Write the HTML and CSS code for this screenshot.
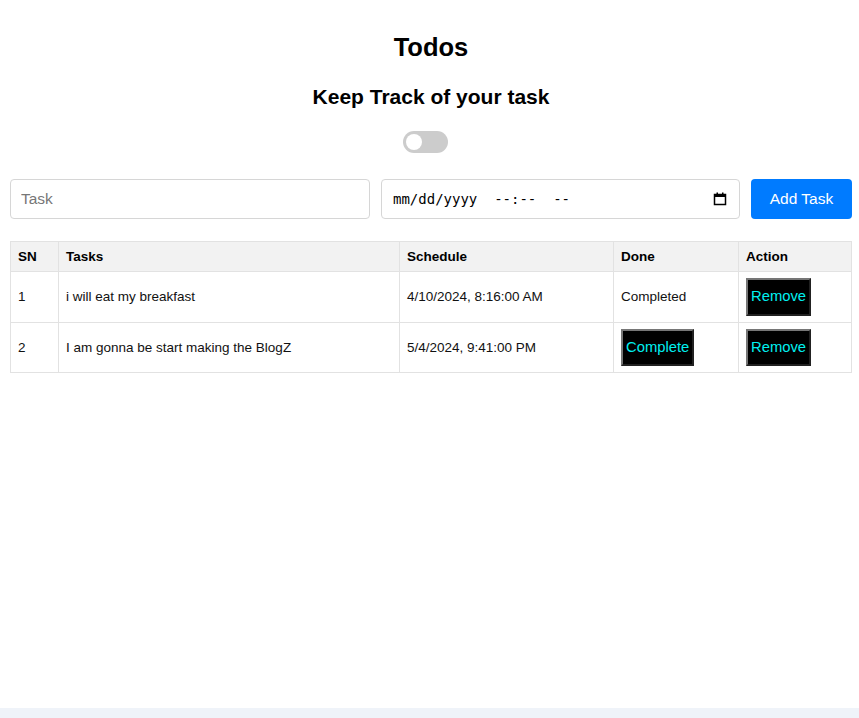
FILE: index.html
```html
<!DOCTYPE html>
<html lang="en">
<head>
<meta charset="UTF-8">
<title>Todos</title>
<link rel="stylesheet" href="styles.css">
</head>
<body>
<div class="app">
  <h1 class="title">Todos</h1>
  <h2 class="subtitle">Keep Track of your task</h2>
  <label class="toggle"><span class="knob"></span></label>
  <form class="task-form">
    <input class="task-input" type="text" placeholder="Task">
    <div class="date-field">
      <input class="date-text" type="text" value="mm/dd/yyyy  --:--  --">
      <svg class="cal-icon" width="14" height="14" viewBox="0 0 14 14" aria-hidden="true">
        <rect x="1.5" y="2.5" width="11" height="10" fill="none" stroke="#000" stroke-width="1.5"/>
        <rect x="1.5" y="2.5" width="11" height="2.5" fill="#000"/>
        <rect x="3.5" y="0.5" width="1.5" height="3" fill="#000"/>
        <rect x="9" y="0.5" width="1.5" height="3" fill="#000"/>
      </svg>
    </div>
    <button class="add-btn" type="button">Add Task</button>
  </form>
  <table class="todo-table">
    <thead>
      <tr>
        <th class="col-sn">SN</th>
        <th class="col-task">Tasks</th>
        <th class="col-sched">Schedule</th>
        <th class="col-done">Done</th>
        <th class="col-action">Action</th>
      </tr>
    </thead>
    <tbody>
      <tr>
        <td>1</td>
        <td>i will eat my breakfast</td>
        <td>4/10/2024, 8:16:00 AM</td>
        <td>Completed</td>
        <td><button class="dark-btn" type="button">Remove</button></td>
      </tr>
      <tr>
        <td>2</td>
        <td>I am gonna be start making the BlogZ</td>
        <td>5/4/2024, 9:41:00 PM</td>
        <td><button class="dark-btn" type="button">Complete</button></td>
        <td><button class="dark-btn" type="button">Remove</button></td>
      </tr>
    </tbody>
  </table>
</div>
</body>
</html>
```

FILE: styles.css
```css
html, body {
  margin: 0;
  padding: 0;
}
body {
  background: #eff3f9;
  font-family: "Liberation Sans", Arial, sans-serif;
  color: #000;
}
.app {
  background: #fff;
  min-height: 708px;
  box-sizing: border-box;
  padding: 32px 7px 0 10px;
  display: flex;
  flex-direction: column;
}
.title {
  margin: 0 0 23px;
  font-size: 25.5px;
  line-height: 30px;
  font-weight: bold;
  text-align: center;
}
.subtitle {
  margin: 0 0 22px;
  font-size: 21px;
  line-height: 24px;
  font-weight: bold;
  text-align: center;
}
.toggle {
  align-self: center;
  width: 45px;
  height: 22px;
  box-sizing: border-box;
  padding: 3px;
  border-radius: 11px;
  background: #ccc;
  display: flex;
  align-items: center;
  margin: 0 12px 26px 0;
}
.knob {
  width: 16px;
  height: 16px;
  border-radius: 50%;
  background: #fff;
}
.task-form {
  display: flex;
  gap: 11px;
  margin: 0 0 22px;
}
.task-input,
.date-field {
  flex: none;
  height: 40px;
  box-sizing: border-box;
  border: 1px solid #d6d6d6;
  border-radius: 4px;
  margin: 0;
  background: #fff;
}
.task-input {
  width: 360px;
  padding: 0 10px;
  font-family: "Liberation Sans", Arial, sans-serif;
  font-size: 15.5px;
  color: #000;
}
.task-input::placeholder {
  color: #777;
}
.date-field {
  width: 359px;
  display: flex;
  align-items: center;
  padding: 0 12px 0 11px;
}
.date-text {
  flex: 1;
  min-width: 0;
  border: none;
  outline: none;
  padding: 0;
  margin: 0;
  background: transparent;
  font-family: "DejaVu Sans Mono", monospace;
  font-size: 14px;
  color: #000;
  white-space: pre;
}
.cal-icon {
  flex: none;
}
.add-btn {
  flex: none;
  width: 101px;
  height: 40px;
  box-sizing: border-box;
  border: none;
  border-radius: 4px;
  background: #007bff;
  color: #fff;
  font-family: "Liberation Sans", Arial, sans-serif;
  font-size: 15.5px;
  padding: 0;
  margin: 0;
}
.todo-table {
  width: 842px;
  border-collapse: collapse;
  table-layout: fixed;
  font-size: 13.5px;
}
.todo-table th,
.todo-table td {
  border: 1px solid #e2e2e2;
  padding: 6px 7px;
  text-align: left;
  line-height: 17px;
  vertical-align: middle;
}
.todo-table th {
  background: #f2f2f2;
  font-weight: bold;
}
.todo-table td {
  color: #111;
}
.col-sn { width: 33px; }
.col-task { width: 326px; }
.col-sched { width: 199px; }
.col-done { width: 110px; }
.col-action { width: 98px; }
.dark-btn {
  background: #000;
  color: #00f0f0;
  border: 2px outset #767676;
  font-family: "Liberation Sans", Arial, sans-serif;
  font-size: 14.8px;
  line-height: 17.5px;
  padding: 8px 3px;
  margin: 0;
}
```
